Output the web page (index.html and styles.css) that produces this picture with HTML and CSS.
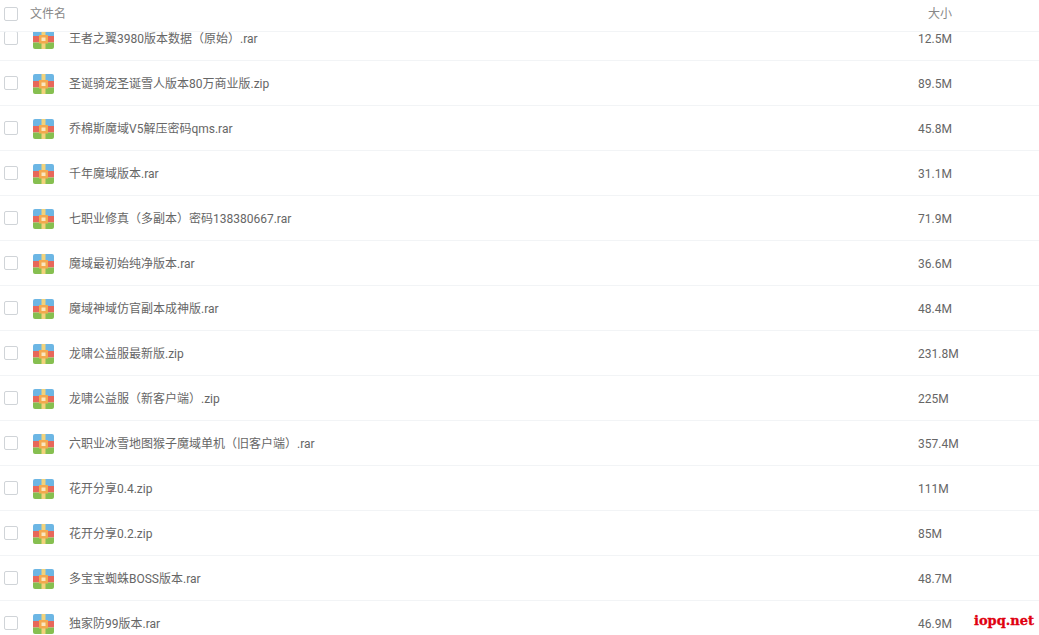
FILE: index.html
```html
<!DOCTYPE html>
<html lang="zh-CN">
<head>
<meta charset="utf-8">
<title>文件列表</title>
<link rel="stylesheet" href="styles.css">
</head>
<body>
<svg class="defs" width="0" height="0" aria-hidden="true">
  <symbol id="rar" viewBox="0 0 21 20">
    <path d="M2 0h17a2 2 0 0 1 2 2v5H0V2a2 2 0 0 1 2-2z" fill="#6cb6e4"/>
    <rect x="0" y="7" width="21" height="6.5" fill="#e8675a"/>
    <path d="M0 13.5h21V18a2 2 0 0 1-2 2H2a2 2 0 0 1-2-2z" fill="#86bf50"/>
    <rect x="8.5" y="0" width="4" height="20" fill="#f2d27a"/>
    <rect x="6" y="6" width="9" height="8.5" fill="#f3a94f"/>
    <rect x="8.5" y="8.5" width="4" height="3.5" fill="#f9e7c0"/>
  </symbol>
</svg>
<div class="table">
  <div class="head">
    <span class="check"></span>
    <span class="head-name">文件名</span>
    <span class="head-size">大小</span>
  </div>
  <div class="viewport">
    <ul class="list">
      <li class="row"><span class="check"></span><svg class="icon"><use href="#rar"/></svg><span class="name">王者之翼3980版本数据（原始）.rar</span><span class="size">12.5M</span></li>
      <li class="row"><span class="check"></span><svg class="icon"><use href="#rar"/></svg><span class="name">圣诞骑宠圣诞雪人版本80万商业版.zip</span><span class="size">89.5M</span></li>
      <li class="row"><span class="check"></span><svg class="icon"><use href="#rar"/></svg><span class="name">乔棉斯魔域V5解压密码qms.rar</span><span class="size">45.8M</span></li>
      <li class="row"><span class="check"></span><svg class="icon"><use href="#rar"/></svg><span class="name">千年魔域版本.rar</span><span class="size">31.1M</span></li>
      <li class="row"><span class="check"></span><svg class="icon"><use href="#rar"/></svg><span class="name">七职业修真（多副本）密码138380667.rar</span><span class="size">71.9M</span></li>
      <li class="row"><span class="check"></span><svg class="icon"><use href="#rar"/></svg><span class="name">魔域最初始纯净版本.rar</span><span class="size">36.6M</span></li>
      <li class="row"><span class="check"></span><svg class="icon"><use href="#rar"/></svg><span class="name">魔域神域仿官副本成神版.rar</span><span class="size">48.4M</span></li>
      <li class="row"><span class="check"></span><svg class="icon"><use href="#rar"/></svg><span class="name">龙啸公益服最新版.zip</span><span class="size">231.8M</span></li>
      <li class="row"><span class="check"></span><svg class="icon"><use href="#rar"/></svg><span class="name">龙啸公益服（新客户端）.zip</span><span class="size">225M</span></li>
      <li class="row"><span class="check"></span><svg class="icon"><use href="#rar"/></svg><span class="name">六职业冰雪地图猴子魔域单机（旧客户端）.rar</span><span class="size">357.4M</span></li>
      <li class="row"><span class="check"></span><svg class="icon"><use href="#rar"/></svg><span class="name">花开分享0.4.zip</span><span class="size">111M</span></li>
      <li class="row"><span class="check"></span><svg class="icon"><use href="#rar"/></svg><span class="name">花开分享0.2.zip</span><span class="size">85M</span></li>
      <li class="row"><span class="check"></span><svg class="icon"><use href="#rar"/></svg><span class="name">多宝宝蜘蛛BOSS版本.rar</span><span class="size">48.7M</span></li>
      <li class="row"><span class="check"></span><svg class="icon"><use href="#rar"/></svg><span class="name">独家防99版本.rar</span><span class="size">46.9M</span></li>
    </ul>
  </div>
</div>
<div class="watermark">iopq.net</div>
</body>
</html>
```
FILE: styles.css
```css
* { box-sizing: border-box; }
html, body { margin: 0; height: 100%; overflow: hidden; background: #fff; }
body { font-family: Roboto, "Noto Sans CJK SC", sans-serif; font-size: 12px; color: #666; position: relative; }
.defs { position: absolute; }
.table { display: flex; flex-direction: column; height: 635px; }
.head { flex: none; height: 32px; display: flex; align-items: center; padding: 0 0 6px 4px; border-bottom: 1px solid #f2f4f6; color: #888; }
.head .check { margin-top: 3px; }
.head-name { margin-left: 12px; width: 898px; }
.head-size { width: 60px; }
.viewport { flex: 1; overflow: hidden; }
.list { list-style: none; margin: -16px 0 0; padding: 0; }
.row { height: 45px; display: flex; align-items: center; padding-left: 4px; border-bottom: 1px solid #f2f4f6; }
.check { flex: none; width: 14px; height: 14px; border: 1px solid #d0d4d8; border-radius: 2px; background: #fff; }
.icon { flex: none; width: 21px; height: 20px; margin: 2px 0 0 15px; }
.name { margin-left: 15px; width: 849px; padding-bottom: 2px; }
.size { color: #666; padding-top: 2px; }
.watermark { position: absolute; right: 5px; bottom: 7px; font-family: "DejaVu Serif", serif; font-weight: bold; font-size: 13px; color: #e00010; -webkit-text-stroke: 0.3px #e00010; }
```
